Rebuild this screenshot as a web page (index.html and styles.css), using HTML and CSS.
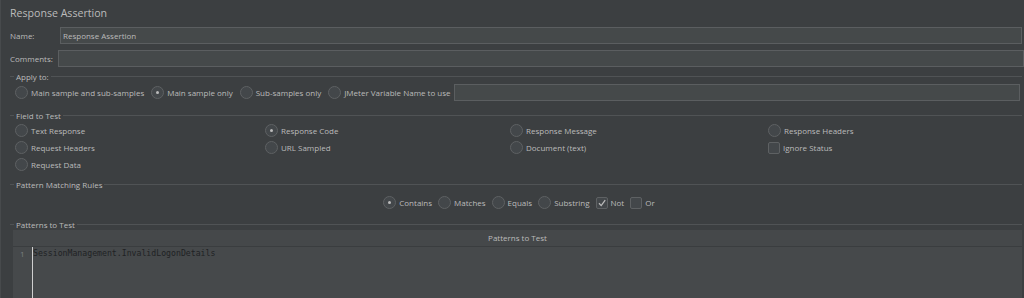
FILE: index.html
```html
<!DOCTYPE html>
<html>
<head>
<meta charset="utf-8">
<link rel="stylesheet" href="styles.css">
</head>
<body>
<div class="page">
  <div class="title">Response Assertion</div>
  <div class="field-row name-row">
    <span class="label">Name:</span>
    <div class="input">Response Assertion</div>
  </div>
  <div class="field-row comments-row">
    <span class="label">Comments:</span>
    <div class="input wide"></div>
  </div>

  <div class="group apply">
    <div class="group-title"><span>Apply to:</span></div>
    <div class="apply-row">
      <span class="opt"><span class="radio"></span>Main sample and sub-samples</span>
      <span class="opt"><span class="radio on"></span>Main sample only</span>
      <span class="opt"><span class="radio"></span>Sub-samples only</span>
      <span class="opt"><span class="radio"></span>JMeter Variable Name to use</span>
      <div class="input var"></div>
    </div>
  </div>

  <div class="group field">
    <div class="group-title"><span>Field to Test</span></div>
    <div class="field-grid">
      <span class="opt"><span class="radio"></span>Text Response</span>
      <span class="opt"><span class="radio on"></span>Response Code</span>
      <span class="opt"><span class="radio"></span>Response Message</span>
      <span class="opt"><span class="radio"></span>Response Headers</span>
      <span class="opt"><span class="radio"></span>Request Headers</span>
      <span class="opt"><span class="radio"></span>URL Sampled</span>
      <span class="opt"><span class="radio"></span>Document (text)</span>
      <span class="opt"><span class="check"></span>Ignore Status</span>
      <span class="opt"><span class="radio"></span>Request Data</span>
    </div>
  </div>

  <div class="group rules">
    <div class="group-title"><span>Pattern Matching Rules</span></div>
    <div class="rules-row">
      <span class="opt"><span class="radio on"></span>Contains</span>
      <span class="opt"><span class="radio"></span>Matches</span>
      <span class="opt"><span class="radio"></span>Equals</span>
      <span class="opt"><span class="radio"></span>Substring</span>
      <span class="opt"><span class="check on"><svg viewBox="0 0 12 12" width="12" height="12"><path d="M3 6.2 L5.2 8.6 L9.2 3.2" fill="none" stroke="#bbbbbb" stroke-width="1.3"/></svg></span>Not</span>
      <span class="opt"><span class="check"></span>Or</span>
    </div>
  </div>

  <div class="group patterns">
    <div class="group-title"><span>Patterns to Test</span></div>
    <div class="table">
      <div class="thead">Patterns to Test</div>
      <div class="tbody">
        <div class="gutter"><span class="ln">1</span></div>
        <div class="code">SessionManagement.InvalidLogonDetails</div>
      </div>
    </div>
  </div>
</div>
</body>
</html>
```

FILE: styles.css
```css
html, body {
  margin: 0;
  padding: 0;
  background: #3c3f41;
  height: 298px;
  overflow: hidden;
}
.page {
  font-family: "Open Sans", "Noto Sans", sans-serif;
  font-size: 8px;
  color: #bbbbbb;
  height: 298px;
  border-left: 1px solid #474a4c;
  box-sizing: border-box;
}
.title {
  font-size: 10.6px;
  padding: 5px 0 0 9px;
  height: 22px;
  box-sizing: border-box;
  line-height: 16px;
}
.field-row {
  display: flex;
  align-items: center;
  padding-left: 9px;
}
.name-row {
  margin-top: 5px;
  padding-right: 2px;
}
.comments-row {
  margin-top: 6px;
}
.label {
  flex: none;
}
.name-row .label { width: 50px; }
.comments-row .label { width: 48px; }
.input {
  flex: 1;
  height: 17px;
  box-sizing: border-box;
  background: #45494a;
  border: 1px solid #5b5e60;
  line-height: 15px;
  padding-left: 2px;
  color: #bbbbbb;
}
.group {
  padding: 0 2px 0 12px;
}
.group-title {
  display: flex;
  align-items: center;
  height: 12px;
  margin-left: -3px;
}
.group-title::before {
  content: "";
  width: 4px;
  border-top: 1px solid #505355;
  flex: none;
}
.group-title::after {
  content: "";
  flex: 1;
  border-top: 1px solid #505355;
  margin-left: 2px;
}
.group-title span {
  padding-left: 2px;
}
.apply { margin-top: 3px; }
.apply-row {
  display: flex;
  align-items: center;
  height: 17px;
  margin-top: 2px;
  padding-right: 2px;
}
.opt {
  display: inline-flex;
  align-items: center;
  white-space: nowrap;
  flex: none;
  height: 17px;
}
.apply-row .opt { margin-right: 5px; }
.apply-row .opt:last-of-type { margin-right: 3px; }
.radio {
  width: 13px;
  height: 13px;
  border-radius: 50%;
  box-sizing: border-box;
  border: 1px solid #5e6163;
  background: #43474a;
  margin: 0 3px 0 2px;
  position: relative;
  flex: none;
}
.radio.on::after {
  content: "";
  position: absolute;
  left: 4px;
  top: 4px;
  width: 3px;
  height: 3px;
  border-radius: 50%;
  background: #bbbbbb;
}
.check {
  width: 12px;
  height: 12px;
  box-sizing: border-box;
  border: 1px solid #5e6163;
  background: #43474a;
  border-radius: 2px;
  margin: 0 3px 0 2px;
  flex: none;
  display: inline-flex;
  align-items: center;
  justify-content: center;
}
.check svg { display: block; margin: -1px; }
.field { margin-top: 8px; }
.field-grid {
  display: grid;
  grid-template-columns: 250px 245px 258px 1fr;
  grid-auto-rows: 17px;
  margin-top: 1px;
}
.rules { margin-top: 5px; }
.rules-row {
  display: flex;
  justify-content: center;
  margin-top: 4px;
  padding-left: 5px;
}
.rules-row .opt { margin-right: 4px; }
.patterns { margin-top: 7px; padding-left: 12px; }
.table {
  margin-top: 0;
  height: 76px;
  background: #46494b;
  display: flex;
  flex-direction: column;
}
.thead {
  height: 16px;
  line-height: 16px;
  text-align: center;
  background: #45484a;
  border-bottom: 1px solid #3a3d3f;
  flex: none;
}
.tbody {
  flex: 1;
  display: flex;
  background: #46494b;
}
.gutter {
  width: 20px;
  border-right: 1px solid #cfcfcf;
  color: #7c7f81;
  font-size: 8px;
  box-sizing: border-box;
  padding-left: 7px;
  padding-top: 1px;
}
.code {
  font-family: "DejaVu Sans Mono", "Liberation Mono", monospace;
  font-size: 8.2px;
  color: #1f2224;
  padding-top: 1px;
  line-height: 10px;
}
```
